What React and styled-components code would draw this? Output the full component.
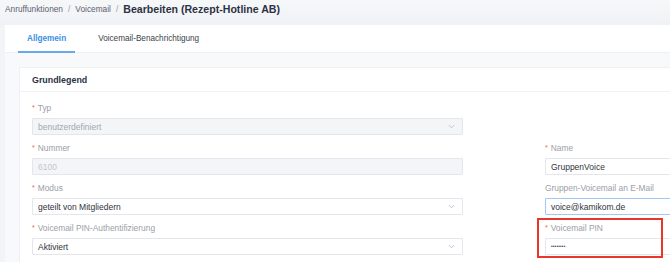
import React from "react";
import styled, { createGlobalStyle } from "styled-components";

const Global = createGlobalStyle`
  html, body { margin: 0; padding: 0; }
  body {
    background: #f3f4f7;
    font-family: "Liberation Sans", Arial, sans-serif;
    width: 670px;
    height: 262px;
    overflow: hidden;
  }
  * { box-sizing: border-box; }
`;

const Page = styled.div`
  width: 670px;
  height: 262px;
  overflow: hidden;
  background: #f3f4f7;
`;

const Header = styled.div`
  height: 25px;
  display: flex;
  align-items: center;
  padding: 0 5px;
  padding-bottom: 8px;
  background: linear-gradient(#f6f7f9, #f1f2f5);
  white-space: nowrap;
`;

const Crumb = styled.span`
  font-size: 8.3px;
  color: #5b6070;
`;

const Sep = styled.span`
  font-size: 8.5px;
  color: #9a9fab;
  margin: 0 5px;
`;

const Title = styled.span`
  font-size: 10.6px;
  font-weight: bold;
  color: #2b3244;
`;

const Panel = styled.div`
  margin-left: 5px;
  background: #ffffff;
`;

const TabBar = styled.div`
  display: flex;
  height: 28px;
  padding-left: 13px;
  gap: 14px;
  border-bottom: 1px solid #eef0f4;
  background: #fff;
`;

const Tab = styled.div`
  padding: 0 9px;
  display: flex;
  align-items: center;
  font-size: 8.2px;
  color: ${(p) => (p.$active ? "#3b8fe8" : "#3a3f4b")};
  font-weight: ${(p) => (p.$active ? "bold" : "normal")};
  border-bottom: 2px solid ${(p) => (p.$active ? "#6aa8ec" : "transparent")};
  margin-bottom: -1px;
  white-space: nowrap;
`;

const Content = styled.div`
  background: #f8f9fb;
  padding: 14px 0 0 14px;
  height: 210px;
`;

const Card = styled.div`
  background: #fff;
  border: 1px solid #eef0f3;
  border-right: none;
  height: 200px;
`;

const CardHead = styled.div`
  height: 24px;
  display: flex;
  align-items: center;
  padding-left: 12px;
  font-size: 8.9px;
  font-weight: bold;
  color: #2b3244;
  border-bottom: 1px solid #f0f2f5;
`;

const Form = styled.div`
  display: grid;
  grid-template-columns: 431px 431px;
  column-gap: 82px;
  padding: 10px 0 0 12px;
`;

const Item = styled.div`
  position: relative;
  height: 40px;
`;

const Label = styled.div`
  height: 12px;
  line-height: 12px;
  font-size: 8.4px;
  color: #9a9ea8;
  margin-bottom: 4px;
  white-space: nowrap;
`;

const Star = styled.span`
  color: #f05a5a;
  margin-right: 3px;
  font-size: 7px;
  vertical-align: 1px;
`;

const Field = styled.div`
  height: 17px;
  display: flex;
  align-items: center;
  justify-content: space-between;
  padding: 0 7px 0 5px;
  border: 1px solid ${(p) => (p.$focus ? "#9fc8f3" : "#e3e6ec")};
  background: ${(p) => (p.$disabled ? "#f4f5f7" : "#fff")};
  color: ${(p) => (p.$disabled ? (p.$faint ? "#c3c6cd" : "#a3a7b0") : "#30333a")};
  font-size: 8.5px;
  border-radius: 1px;
  white-space: nowrap;
`;

const Dots = styled.span`
  font-size: 4.6px;
  letter-spacing: 0.2px;
  color: #30333a;
`;

const Highlight = styled.div`
  position: absolute;
  left: -8px;
  top: -4px;
  width: 126px;
  height: 40px;
  border: 2px solid #e8362a;
  pointer-events: none;
`;

const Chevron = () => (
  <svg width="7" height="5" viewBox="0 0 7 5">
    <path d="M0.8 1 L3.5 3.8 L6.2 1" fill="none" stroke="#b9bdc6" strokeWidth="0.9" />
  </svg>
);

const FormItem = ({ label, required, children, highlight }) => (
  <Item>
    <Label>
      {required && <Star>*</Star>}
      {label}
    </Label>
    {children}
    {highlight && <Highlight />}
  </Item>
);

export default function App() {
  return (
    <Page>
      <Global />
      <Header>
        <Crumb>Anruffunktionen</Crumb>
        <Sep>/</Sep>
        <Crumb>Voicemail</Crumb>
        <Sep>/</Sep>
        <Title>Bearbeiten (Rezept-Hotline AB)</Title>
      </Header>
      <Panel>
        <TabBar>
          <Tab $active>Allgemein</Tab>
          <Tab>Voicemail-Benachrichtigung</Tab>
        </TabBar>
        <Content>
          <Card>
            <CardHead>Grundlegend</CardHead>
            <Form>
              <FormItem label="Typ" required>
                <Field $disabled>
                  <span>benutzerdefiniert</span>
                  <Chevron />
                </Field>
              </FormItem>
              <div />
              <FormItem label="Nummer" required>
                <Field $disabled $faint>
                  <span>6100</span>
                </Field>
              </FormItem>
              <FormItem label="Name" required>
                <Field>
                  <span>GruppenVoice</span>
                </Field>
              </FormItem>
              <FormItem label="Modus" required>
                <Field>
                  <span>geteilt von Mitgliedern</span>
                  <Chevron />
                </Field>
              </FormItem>
              <FormItem label="Gruppen-Voicemail an E-Mail">
                <Field $focus>
                  <span>voice@kamikom.de</span>
                </Field>
              </FormItem>
              <FormItem label="Voicemail PIN-Authentifizierung" required>
                <Field>
                  <span>Aktiviert</span>
                  <Chevron />
                </Field>
              </FormItem>
              <FormItem label="Voicemail PIN" required highlight>
                <Field>
                  <Dots>••••••••</Dots>
                </Field>
              </FormItem>
            </Form>
          </Card>
        </Content>
      </Panel>
    </Page>
  );
}
